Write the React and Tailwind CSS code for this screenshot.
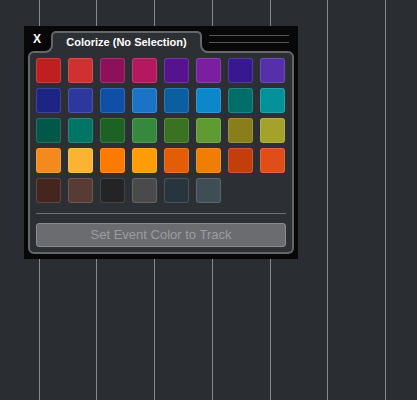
import React from "react";

const swatches = [
  "#c01f20", "#cf3030", "#8e1059", "#b4185f", "#56138e", "#7a1fa0", "#37198f", "#5530a8",
  "#1c2484", "#2d389c", "#0f4fa7", "#1b73c6", "#0b5f9e", "#0c87c9", "#016e6a", "#039299",
  "#015848", "#017565", "#1d6125", "#35883c", "#3a7221", "#5f9a33", "#8a7e1a", "#a3a22a",
  "#f28a1e", "#fbb431", "#fd7a02", "#fe9d05", "#e35d06", "#f07d05", "#c43e0c", "#df4d19",
  "#45261f", "#583b33", "#242424", "#4a4a4a", "#29353e", "#3f4d55",
];

const Tab = ({ title }) => (
  <div className="relative z-10 self-end -mb-[2px] h-[22px] w-[151px] shrink-0 rounded-t-[5px] border-2 border-b-0 border-[#65686b] bg-[#2c3035] pt-[2px] text-center text-[11px] font-bold leading-[14px] text-white">
    {title}
    {/* concave joins into the panel border */}
    <div className="absolute bottom-0 left-[-8px] h-[8px] w-[8px] bg-[#2c3035]">
      <div className="h-full w-full rounded-br-[8px] border-b-2 border-r-2 border-[#65686b] bg-[#080808]" />
    </div>
    <div className="absolute bottom-0 left-full h-[8px] w-[8px] bg-[#2c3035]">
      <div className="h-full w-full rounded-bl-[8px] border-b-2 border-l-2 border-[#65686b] bg-[#080808]" />
    </div>
  </div>
);

const App = () => {
  return (
    <div
      className="relative h-[400px] w-[417px] overflow-hidden bg-[#2a2e32]"
      style={{ fontFamily: '"Liberation Sans", Arial, sans-serif' }}
    >
      {/* arrange grid lines */}
      <div className="flex h-full pl-[38.5px]">
        {Array.from({ length: 7 }).map((_, i) => (
          <div key={i} className="h-full w-[57.8px] shrink-0 border-l border-[#868a8f]" />
        ))}
      </div>

      {/* colorize popup */}
      <div className="absolute left-[24px] top-[26px] flex w-[274px] flex-col bg-[#080808] px-[4px] pb-[5px]">
        <div className="flex h-[25px] items-start">
          <div className="w-[23px] shrink-0 pl-[5px] pt-[6px] text-[12px] font-bold leading-[14px] text-white">
            X
          </div>
          <Tab title="Colorize (No Selection)" />
          <div className="ml-[7px] mr-[5px] flex flex-1 flex-col gap-[6px] pt-[9px]">
            <div className="h-px bg-[#55585b]" />
            <div className="h-px bg-[#55585b]" />
          </div>
        </div>

        <div className="rounded-[6px] border-2 border-[#65686b] bg-[#2c3035] px-[6px] pb-[5px] pt-[5px]">
          <div className="grid grid-cols-[repeat(8,25px)] gap-x-[7px] gap-y-[5px]">
            {swatches.map((c) => (
              <div
                key={c}
                className="h-[25px] w-[25px] rounded-[3px] border border-white/15"
                style={{ backgroundColor: c }}
              />
            ))}
          </div>
          <div className="mt-[10px] h-px bg-[#6d7073]" />
          <button className="mt-[9px] flex h-[24px] w-full items-center justify-center rounded-[3px] border border-[#8c8d90] bg-[#6b6c70] text-[13px] text-[#9c9d9f]">
            Set Event Color to Track
          </button>
        </div>
      </div>
    </div>
  );
};

export default App;
